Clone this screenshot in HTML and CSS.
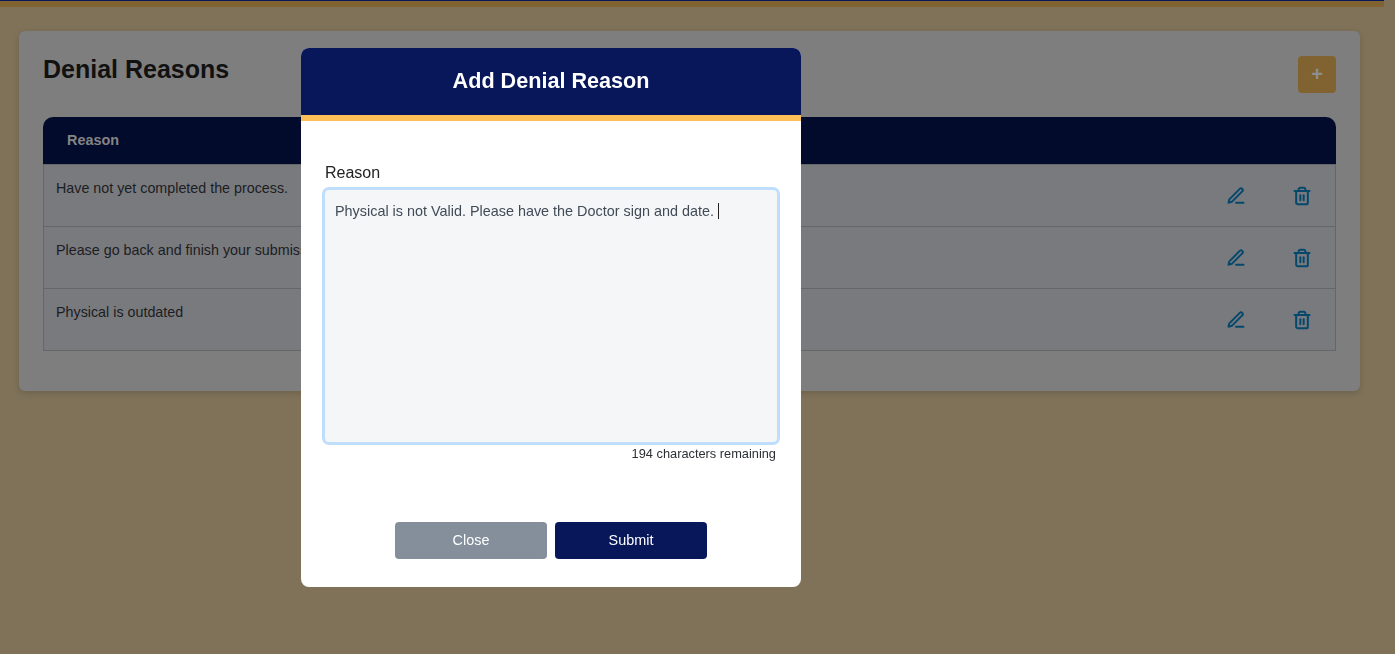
FILE: index.html
```html
<!DOCTYPE html>
<html lang="en">
<head>
  <meta charset="UTF-8">
  <meta name="viewport" content="width=device-width, initial-scale=1.0">
  <title>Denial Reasons</title>
  <link rel="stylesheet" href="styles.css">
</head>
<body>
  <div class="page">
    <div class="top-bar"></div>
    <div class="card">
      <div class="card-head">
        <h1>Denial Reasons</h1>
        <button class="add-btn" type="button">+</button>
      </div>
      <div class="table-head">Reason</div>
      <div class="table-row">
        <p>Have not yet completed the process.</p>
        <div class="row-actions">
          <svg class="icon" viewBox="0 0 24 24"><path d="M12 20h9"/><path d="M16.5 3.5a2.12 2.12 0 0 1 3 3L7 19l-4 1 1-4Z"/></svg>
          <svg class="icon" viewBox="0 0 24 24"><path d="M3 6h18"/><path d="M19 6v14c0 1-1 2-2 2H7c-1 0-2-1-2-2V6"/><path d="M8 6V4c0-1 1-2 2-2h4c1 0 2 1 2 2v2"/><path d="M10 11v6"/><path d="M14 11v6"/></svg>
        </div>
      </div>
      <div class="table-row">
        <p>Please go back and finish your submission.</p>
        <div class="row-actions">
          <svg class="icon" viewBox="0 0 24 24"><path d="M12 20h9"/><path d="M16.5 3.5a2.12 2.12 0 0 1 3 3L7 19l-4 1 1-4Z"/></svg>
          <svg class="icon" viewBox="0 0 24 24"><path d="M3 6h18"/><path d="M19 6v14c0 1-1 2-2 2H7c-1 0-2-1-2-2V6"/><path d="M8 6V4c0-1 1-2 2-2h4c1 0 2 1 2 2v2"/><path d="M10 11v6"/><path d="M14 11v6"/></svg>
        </div>
      </div>
      <div class="table-row">
        <p>Physical is outdated</p>
        <div class="row-actions">
          <svg class="icon" viewBox="0 0 24 24"><path d="M12 20h9"/><path d="M16.5 3.5a2.12 2.12 0 0 1 3 3L7 19l-4 1 1-4Z"/></svg>
          <svg class="icon" viewBox="0 0 24 24"><path d="M3 6h18"/><path d="M19 6v14c0 1-1 2-2 2H7c-1 0-2-1-2-2V6"/><path d="M8 6V4c0-1 1-2 2-2h4c1 0 2 1 2 2v2"/><path d="M10 11v6"/><path d="M14 11v6"/></svg>
        </div>
      </div>
    </div>
  </div>

  <div class="modal">
    <div class="modal-head">Add Denial Reason</div>
    <div class="modal-body">
      <label class="field-label">Reason</label>
      <div class="textarea">Physical is not Valid. Please have the Doctor sign and date. <span class="caret"></span></div>
      <div class="counter">194 characters remaining</div>
      <div class="modal-actions">
        <button class="btn btn-close" type="button">Close</button>
        <button class="btn btn-submit" type="button">Submit</button>
      </div>
    </div>
  </div>
</body>
</html>
```

FILE: styles.css
```css
* {
  box-sizing: border-box;
}
html, body {
  height: 100%;
}
body {
  margin: 0;
  font-family: "Liberation Sans", Arial, sans-serif;
  background: #7f7259;
  overflow: hidden;
}
.page {
  width: 1384px;
}
.top-bar {
  height: 7px;
  background: #806330;
  border-top: 1px solid #07175a;
}
.card {
  margin: 24px 24px 0 19px;
  height: 360px;
  padding: 25px 24px 0;
  background: #7e7e7e;
  border-radius: 6px;
  box-shadow: 0 2px 6px rgba(0, 0, 0, 0.15);
}
.card-head {
  display: flex;
  justify-content: space-between;
  align-items: flex-start;
  height: 61px;
}
h1 {
  margin: 0;
  font-size: 25px;
  line-height: 27px;
  color: #111;
}
.add-btn {
  width: 38px;
  height: 37px;
  border: 0;
  border-radius: 4px;
  background: #806330;
  color: #8e8e8e;
  font-size: 20px;
  font-weight: bold;
  font-family: inherit;
  padding: 0;
}
.table-head {
  height: 47px;
  padding: 0 24px;
  line-height: 46px;
  font-size: 14.4px;
  font-weight: bold;
  color: #848484;
  background: #030b2d;
  border-radius: 10px 10px 0 0;
}
.table-row {
  display: flex;
  justify-content: space-between;
  height: 62px;
  padding: 15px 12px 0;
  background: #797a7e;
  border: 1px solid #666;
  border-top: 0;
  font-size: 14.3px;
  color: #1c1d1f;
}
.table-head + .table-row {
  height: 63px;
  border-top: 1px solid #666;
}
.table-row p {
  margin: 0;
}
.row-actions {
  display: flex;
  gap: 46px;
  padding: 6px 11px 0 0;
}
.icon {
  width: 20px;
  height: 20px;
  fill: none;
  stroke: #05486c;
  stroke-width: 2.4;
  stroke-linecap: round;
  stroke-linejoin: round;
}

/* dialog sits over the dimmed page */
.modal {
  position: fixed;
  left: 301px;
  top: 48px;
  width: 500px;
  height: 539px;
  background: #fff;
  border-radius: 8px;
  overflow: hidden;
}
.modal-head {
  height: 73px;
  line-height: 66px;
  text-align: center;
  font-size: 21.6px;
  font-weight: bold;
  color: #fff;
  background: #07175a;
  border-bottom: 6px solid #fdbf57;
}
.modal-body {
  padding: 43px 21px 0;
}
.field-label {
  display: block;
  margin-left: 3px;
  font-size: 16px;
  line-height: 18px;
  color: #222;
}
.textarea {
  height: 258px;
  margin-top: 5px;
  padding: 13px 10px;
  background: #f4f6f8;
  border: 3px solid #bfdefc;
  border-radius: 7px;
  font-size: 14.4px;
  line-height: 16px;
  color: #414b57;
}
.caret {
  display: inline-block;
  width: 1px;
  height: 16px;
  background: #222;
  vertical-align: -3px;
}
.counter {
  margin-top: 2px;
  padding-right: 4px;
  text-align: right;
  font-size: 12.8px;
  line-height: 14px;
  color: #2b2f33;
}
.modal-actions {
  display: flex;
  justify-content: center;
  gap: 8px;
  margin-top: 61px;
}
.btn {
  width: 152px;
  height: 37px;
  border: 0;
  border-radius: 4px;
  color: #fff;
  font-size: 14.4px;
  font-family: inherit;
  padding: 0 0 2px;
}
.btn-close {
  background: #848f9b;
}
.btn-submit {
  background: #07175a;
}
```
